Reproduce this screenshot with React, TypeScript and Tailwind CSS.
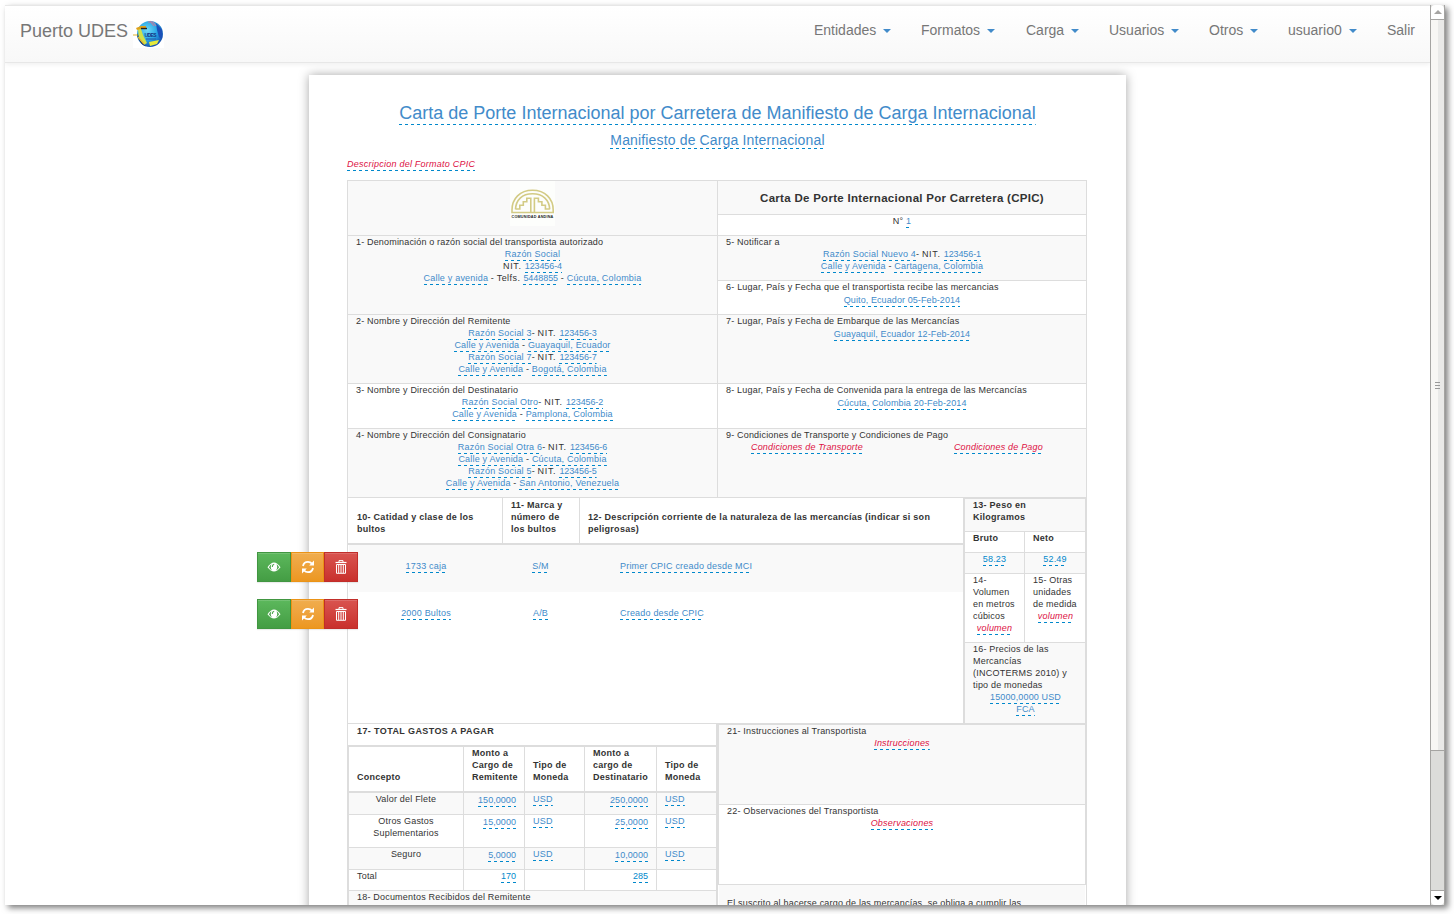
import React from "react";

type Kids = { children?: React.ReactNode; className?: string };

const dashed =
  "-mb-px inline-block whitespace-nowrap pb-px bg-[repeating-linear-gradient(to_right,#0088cc_0_3px,transparent_3px_6px)] bg-[length:100%_1px] bg-bottom bg-no-repeat ";

function L({ children, className = "" }: Kids) {
  return <a className={dashed + "text-[#428bca] " + className}>{children}</a>;
}

function Empty({ children }: Kids) {
  return <a className={dashed + "italic text-[#dd1144]"}>{children}</a>;
}

function Cell({ children, className = "" }: Kids) {
  return <div className={"border-l border-t border-[#ddd] px-2 " + className}>{children}</div>;
}

function Nit({ value }: { value: string }) {
  return (
    <>
      <span className="tracking-[0.650px]">NIT. </span>
      <L className="tracking-[-0.100px]">{value}</L>
    </>
  );
}

function Party({ name, nit, address, city }: { name: string; nit: string; address: string; city: string }) {
  return (
    <div className="text-center">
      <div>
        <L>{name}</L>- <Nit value={nit} />
      </div>
      <div>
        <L>{address}</L> - <L>{city}</L>
      </div>
    </div>
  );
}

function Globe() {
  return (
    <svg width="31" height="28" viewBox="0 0 31 28" className="block">
      <defs>
        <radialGradient id="globe" cx="40%" cy="35%" r="70%">
          <stop offset="0" stopColor="#6fd8f6" />
          <stop offset="0.55" stopColor="#25a4e4" />
          <stop offset="1" stopColor="#1546a8" />
        </radialGradient>
        <clipPath id="disc">
          <circle cx="17" cy="14" r="13" />
        </clipPath>
      </defs>
      <rect width="31" height="28" fill="#fff" />
      <circle cx="17" cy="14" r="13" fill="url(#globe)" />
      <g clipPath="url(#disc)">
        <path d="M5 9l3 0 2 6 4 8-3 2-5-6z" fill="#cfe04a" />
        <path d="M16 22l10-2-2 4-7 2z" fill="#e6ea3a" />
        <path d="M23 3l6 7 0 9-3-2-2-7z" fill="#1b50b8" />
        <path d="M4 14q3 9 9 13" fill="none" stroke="#14306f" strokeWidth="1.2" />
      </g>
      <path d="M3 8l5-2 5 0 0 2-5 1-4 1z" fill="#e0a21c" />
      <path d="M8 8.500h6" stroke="#222" strokeWidth="1.400" />
      <path d="M15 2l5 0 3 4M17 1l4 5" stroke="#b77fa5" strokeWidth="1.200" fill="none" />
      <path d="M0 15h5M5 17l6 7" stroke="#e0b52c" strokeWidth="1.200" />
      <text x="11.500" y="17" fontSize="5" fontWeight="700" fill="#16337f" textLength="12" fontFamily="Liberation Sans">UDES</text>
      <path d="M13 19h10" stroke="#2b62ad" strokeWidth="1.200" />
    </svg>
  );
}

function AndeanLogo() {
  return (
    <svg width="45" height="45" viewBox="0 0 45 45" className="block">
      <rect width="45" height="45" fill="#fdfefc" />
      <g fill="none" stroke="#d3cb85" strokeWidth="1.600">
        <path d="M2 31.500V29C2 17.500 10 9.300 22.500 9.300S43.200 17.500 43.200 29V31.500Z" />
        <path d="M5.500 28.300C5.800 19 12 12.800 22.500 12.800S39.400 19 39.700 28.300" />
        <path d="M20.800 31V17.300H16.800V20.700H13.300V24.200H9.800V28H5.500" />
        <path d="M24.400 31V17.300H28.400V20.700H31.900V24.200H35.400V28H39.700" />
      </g>
      <text x="1.500" y="36.800" fontSize="3.700" fontWeight="700" fill="#222" textLength="42" lengthAdjust="spacingAndGlyphs" fontFamily="Liberation Sans">COMUNIDAD ANDINA</text>
    </svg>
  );
}

function EyeIcon() {
  return (
    <svg width="14" height="14" viewBox="0 0 14 14" className="shrink-0">
      <path d="M0.500 7.300Q7-2.400 13.500 7.300Q7 15.800 0.500 7.300Z" fill="#fff" />
      <path d="M1.900 7.200Q3 5.200 4.400 4.300Q2.900 8.500 5.200 10.500Q3.200 9.500 1.900 7.200ZM12.100 7.200Q11 5.200 9.600 4.300Q11.100 8.500 8.800 10.500Q10.800 9.500 12.100 7.200Z" fill="#4da74d" />
      <path d="M7.200 4.300Q5.200 4.700 5.300 7" fill="none" stroke="#4da74d" strokeWidth="1.100" />
    </svg>
  );
}

function RefreshIcon() {
  return (
    <svg width="14" height="14" viewBox="0 0 14 14" fill="none" stroke="#fff" strokeWidth="1.800" className="shrink-0">
      <path d="M2 6C2.500 3.200 4.600 1.800 7 1.800C8.700 1.800 10 2.500 11 3.600" />
      <path d="M12 8C11.500 10.800 9.400 12.200 7 12.200C5.300 12.200 4 11.500 3 10.400" />
      <path d="M13 0.600V5.600H8.200Z" fill="#fff" stroke="none" />
      <path d="M1 13.400V8.400H5.800Z" fill="#fff" stroke="none" />
    </svg>
  );
}

function TrashIcon() {
  return (
    <svg width="12" height="14" viewBox="0 0 12 14" fill="none" stroke="#fff" className="-mt-px shrink-0">
      <path d="M4 2V0.600H8V2" />
      <path d="M0.500 2.500H11.500" strokeWidth="1.200" />
      <path d="M1.500 4.500H10.500V13.300H1.500Z" strokeWidth="1" />
      <path d="M3.700 4.500V13M6 4.500V13M8.300 4.500V13" strokeWidth="1" />
    </svg>
  );
}

function Actions() {
  const b = "flex h-[30px] items-center justify-center border bg-gradient-to-b shadow-[inset_0_1px_0_rgba(255,255,255,0.15),0_1px_1px_rgba(0,0,0,0.075)] ";
  return (
    <div className="absolute -left-[92px] top-[7px] flex">
      <button className={b + "w-[34px] border-[#419641] from-[#5cb85c] to-[#449d44]"}><EyeIcon /></button>
      <button className={b + "w-[33px] border-[#eb9316] from-[#f0ad4e] to-[#ec971f]"}><RefreshIcon /></button>
      <button className={b + "w-[34px] border-[#c12e2a] from-[#d9534f] to-[#c9302c]"}><TrashIcon /></button>
    </div>
  );
}

const nav: [string, string, boolean][] = [
  ["Entidades", "w-[107px]", true],
  ["Formatos", "w-[105px]", true],
  ["Carga", "w-[83px]", true],
  ["Usuarios", "w-[100px]", true],
  ["Otros", "w-[79px]", true],
  ["usuario0", "w-[99px]", true],
  ["Salir", "w-[43px]", false],
];

function NavBar() {
  return (
    <nav className="flex h-[58px] border-b border-t border-[#e7e7e7] bg-gradient-to-b from-white to-[#f8f8f8] text-[#777] shadow-[0_1px_5px_rgba(0,0,0,0.075)]">
      <div className="flex pl-[15px] pt-[14px]">
        <span className="text-[18px] leading-[22px]">Puerto UDES</span>
        <span className="ml-[5px]"><Globe /></span>
      </div>
      <ul className="ml-auto flex items-start pt-[14px] text-[14px] leading-5">
        {nav.map(([label, w, caret]) => (
          <li key={label} className={"flex items-center " + w}>
            {label}
            {caret && <i className="ml-[7px] mt-[2px] border-x-4 border-t-4 border-x-transparent border-t-[#428bca]" />}
          </li>
        ))}
      </ul>
    </nav>
  );
}

function Parties() {
  return (
    <section className="grid grid-cols-[370px_370px]">
      <div>
        <Cell className="flex h-[55px] justify-center bg-[#f9f9f9]"><AndeanLogo /></Cell>
        <Cell className="h-[79px] bg-[#f9f9f9]">
          <p className="tracking-[0.170px]">1- Denominación o razón social del transportista autorizado</p>
          <div className="text-center">
            <div><L>Razón Social</L></div>
            <div><Nit value="123456-4" /></div>
            <div><L>Calle y avenida</L> - <span className="tracking-[0.450px]">Telfs. </span><L className="tracking-[-0.050px]">5448855</L> - <L>Cúcuta, Colombia</L></div>
          </div>
        </Cell>
        <Cell className="h-[69px] bg-[#f9f9f9]">
          <p>2- Nombre y Dirección del Remitente</p>
          <Party name="Razón Social 3" nit="123456-3" address="Calle y Avenida" city="Guayaquil, Ecuador" />
          <Party name="Razón Social 7" nit="123456-7" address="Calle y Avenida" city="Bogotá, Colombia" />
        </Cell>
        <Cell className="h-[45px]">
          <p>3- Nombre y Dirección del Destinatario</p>
          <Party name="Razón Social Otro" nit="123456-2" address="Calle y Avenida" city="Pamplona, Colombia" />
        </Cell>
        <Cell className="h-[69px] bg-[#f9f9f9]">
          <p>4- Nombre y Dirección del Consignatario</p>
          <Party name="Razón Social Otra 6" nit="123456-6" address="Calle y Avenida" city="Cúcuta, Colombia" />
          <Party name="Razón Social 5" nit="123456-5" address="Calle y Avenida" city="San Antonio, Venezuela" />
        </Cell>
      </div>
      <div className="border-r border-[#ddd]">
        <Cell className="h-[34px] bg-[#f9f9f9] text-center text-[11.500px] font-bold leading-[34px] tracking-[0.290px]">
          Carta De Porte Internacional Por Carretera (CPIC)
        </Cell>
        <Cell className="h-[21px] text-center">N° <L>1</L></Cell>
        <Cell className="h-[45px] bg-[#f9f9f9]">
          <p>5- Notificar a</p>
          <Party name="Razón Social Nuevo 4" nit="123456-1" address="Calle y Avenida" city="Cartagena, Colombia" />
        </Cell>
        <Cell className="h-[34px]">
          <p className="tracking-[0.210px]">6- Lugar, País y Fecha que el transportista recibe las mercancias</p>
          <div className="mt-px text-center"><L className="tracking-[0.090px]">Quito, Ecuador 05-Feb-2014</L></div>
        </Cell>
        <Cell className="h-[69px] bg-[#f9f9f9]">
          <p className="tracking-[0.210px]">7- Lugar, País y Fecha de Embarque de las Mercancías</p>
          <div className="mt-px text-center"><L className="tracking-[0.110px]">Guayaquil, Ecuador 12-Feb-2014</L></div>
        </Cell>
        <Cell className="h-[45px]">
          <p>8- Lugar, País y Fecha de Convenida para la entrega de las Mercancías</p>
          <div className="mt-px text-center"><L className="tracking-[0.130px]">Cúcuta, Colombia 20-Feb-2014</L></div>
        </Cell>
        <Cell className="h-[69px] bg-[#f9f9f9]">
          <p className="tracking-[0.180px]">9- Condiciones de Transporte y Condiciones de Pago</p>
          <div className="flex gap-[91px] pl-[25px] tracking-[0.180px]">
            <Empty>Condiciones de Transporte</Empty>
            <Empty>Condiciones de Pago</Empty>
          </div>
        </Cell>
      </div>
    </section>
  );
}

const goods: [string, string, string, string][] = [
  ["1733 caja", "S/M", "Primer CPIC creado desde MCI", "bg-[#f9f9f9]"],
  ["2000 Bultos", "A/B", "Creado desde CPIC", "bg-white"],
];

function Goods() {
  return (
    <section className="flex h-[226px]">
      <div className="w-[616px] border-l border-t border-[#ddd]">
        <div className="grid h-[47px] grid-cols-[154px_77px_384px] border-b-2 border-[#ddd] font-bold tracking-[0.270px]">
          <div className="flex items-end pb-2 pl-[9px]"><p>10- Catidad y clase de los<br />bultos</p></div>
          <div className="flex items-end border-l border-[#ddd] pb-2 pl-2"><p>11- Marca y<br />número de<br />los bultos</p></div>
          <div className="flex items-end border-l border-[#ddd] pb-2 pl-2"><p className="whitespace-nowrap">12- Descripción corriente de la naturaleza de las mercancías (indicar si son<br />peligrosas)</p></div>
        </div>
        {goods.map(([qty, mark, text, bg]) => (
          <div key={qty} className={"relative ml-px grid h-[47px] grid-cols-[154px_75px_385px] pt-[15px] " + bg}>
            <div className="text-center"><L>{qty}</L></div>
            <div className="text-center"><L>{mark}</L></div>
            <div className="pl-[42px]"><L>{text}</L></div>
            <Actions />
          </div>
        ))}
      </div>
      <div className="w-[124px] border-x-2 border-t-2 border-[#ddd]">
        <div className="h-8 bg-[#f9f9f9] pl-2 font-bold tracking-[0.270px]">13- Peso en<br />Kilogramos</div>
        <div className="grid h-[21px] grid-cols-[59px_61px] border-t border-[#ddd] font-bold tracking-[0.270px]">
          <div className="pl-2">Bruto</div>
          <div className="border-l border-[#ddd] pl-2">Neto</div>
        </div>
        <div className="grid h-[21px] grid-cols-[59px_61px] border-t border-[#ddd] bg-[#f9f9f9] text-center">
          <div><L className="!text-[#0088cc]">58.23</L></div>
          <div className="border-l border-[#ddd]"><L className="!text-[#0088cc]">52.49</L></div>
        </div>
        <div className="grid h-[69px] grid-cols-[59px_61px] border-t border-[#ddd]">
          <div className="whitespace-nowrap pl-2">14-<br />Volumen<br />en metros<br />cúbicos<div className="pr-2 text-center"><Empty>volumen</Empty></div></div>
          <div className="whitespace-nowrap border-l border-[#ddd] pl-2">15- Otras<br />unidades<br />de medida<div className="pr-[7px] text-center"><Empty>volumen</Empty></div></div>
        </div>
        <div className="h-[81px] whitespace-nowrap border-t border-[#ddd] bg-[#f9f9f9] px-2">
          16- Precios de las<br />Mercancías<br /><span className="tracking-[0.250px]">(INCOTERMS 2010) y</span><br />tipo de monedas
          <div className="pl-px text-center"><L className="tracking-[0.130px]">15000,0000 USD</L></div>
          <div className="pl-px text-center"><L>FCA</L></div>
        </div>
      </div>
    </section>
  );
}

const costGrid = "grid grid-cols-[114px_61px_60px_72px_60px] ";
const costs: [string, string, string, string][] = [
  ["Valor del Flete", "150,0000", "250,0000", "h-[21px] bg-[#f9f9f9]"],
  ["Otros Gastos Suplementarios", "15,0000", "25,0000", "h-[33px] border-t"],
  ["Seguro", "5,0000", "10,0000", "h-[22px] border-t bg-[#f9f9f9]"],
];

function Costs() {
  return (
    <section className="flex">
      <div className="w-[369px]">
        <div className="h-[22px] border-l border-t border-[#ddd] pl-[9px] pt-px font-bold tracking-[0.400px]">17- TOTAL GASTOS A PAGAR</div>
        <div className="border-l-2 border-[#ddd]">
          <div className={costGrid + "h-12 border-y-2 border-[#ddd] font-bold tracking-[0.250px]"}>
            <div className="flex items-end pb-2 pl-2">Concepto</div>
            <div className="border-l border-[#ddd] pl-2">Monto a<br />Cargo de<br />Remitente</div>
            <div className="flex items-end border-l border-[#ddd] pb-2 pl-2"><p>Tipo de<br />Moneda</p></div>
            <div className="border-l border-[#ddd] pl-2">Monto a<br />cargo de<br />Destinatario</div>
            <div className="flex items-end border-l border-[#ddd] pb-2 pl-2"><p>Tipo de<br />Moneda</p></div>
          </div>
          {costs.map(([name, a, b, cls]) => (
            <div key={name} className={costGrid + "border-[#ddd] " + cls}>
              <div className="px-4 text-center">{name}</div>
              <div className="border-l border-[#ddd] pr-[8px] pt-px text-right tracking-[0.050px]"><L>{a}</L></div>
              <div className="border-l border-[#ddd] pl-2"><L>USD</L></div>
              <div className="border-l border-[#ddd] pr-[8px] pt-px text-right tracking-[0.050px]"><L>{b}</L></div>
              <div className="border-l border-[#ddd] pl-2"><L>USD</L></div>
            </div>
          ))}
          <div className={costGrid + "h-[21px] border-t border-[#ddd]"}>
            <div className="pl-2">Total</div>
            <div className="border-l border-[#ddd] pr-[8px] text-right tracking-normal"><L className="!text-[#0088cc]">170</L></div>
            <div className="border-l border-[#ddd]" />
            <div className="border-l border-[#ddd] pr-[8px] text-right tracking-normal"><L className="!text-[#0088cc]">285</L></div>
            <div className="border-l border-[#ddd]" />
          </div>
          <div className="h-20 border-t border-[#ddd] bg-[#f9f9f9] pl-2">18- Documentos Recibidos del Remitente</div>
        </div>
      </div>
      <div className="w-[371px]">
        <div className="border-l-3 border-r-2 border-t-2 border-[#ddd]">
          <div className="h-[79px] bg-[#f9f9f9] px-2">
            21- Instrucciones al Transportista
            <div className="text-center"><Empty>Instrucciones</Empty></div>
          </div>
          <div className="h-[81px] border-y border-[#ddd] px-2">
            22- Observaciones del Transportista
            <div className="text-center"><Empty>Observaciones</Empty></div>
          </div>
        </div>
        <div className="h-20 border-l-2 border-r border-[#ddd]">
          <div className="mx-px h-20 bg-[#f9f9f9] px-2 pt-3">El suscrito al hacerse cargo de las mercancías, se obliga a cumplir las</div>
        </div>
      </div>
    </section>
  );
}

function Sheet() {
  return (
    <main className="ml-[304px] mt-[12px] h-[900px] w-[817px] bg-white px-[38px] pt-[28px] text-[9px] leading-3 tracking-[0.200px] shadow-[0_0_10px_rgba(0,0,0,0.350)]">
      <h1 className="h-5 text-center text-[18px] leading-[21px] tracking-normal"><L>Carta de Porte Internacional por Carretera de Manifiesto de Carga Internacional</L></h1>
      <h2 className="mt-[9px] h-4 text-center text-[14px] leading-4 tracking-[0.150px]"><L>Manifiesto de Carga Internacional</L></h2>
      <p className="mb-[10px] mt-[10px] h-3 tracking-[0.240px]"><Empty>Descripcion del Formato CPIC</Empty></p>
      <Parties />
      <Goods />
      <Costs />
    </main>
  );
}

function ScrollBar() {
  return (
    <aside className="flex w-[15px] flex-col border-x border-[#a5a4a2] bg-[#dcdcda]">
      <div className="flex h-[15px] items-center justify-center rounded-t-sm border-b border-[#a5a4a2] bg-white">
        <i className="border-x-4 border-b-4 border-x-transparent border-b-[#a5a4a2]" />
      </div>
      <div className="flex h-[731px] flex-col items-center justify-center gap-[2px] border-b border-[#a5a4a2] bg-gradient-to-r from-[#f7f6f4] from-50% to-[#e9e9e8] to-50%">
        <i className="h-px w-[5px] bg-[#999]" />
        <i className="h-px w-[5px] bg-[#999]" />
        <i className="h-px w-[5px] bg-[#999]" />
      </div>
      <div className="mt-auto flex h-[15px] items-center justify-center rounded-b-sm border-t border-[#a5a4a2] bg-white">
        <i className="border-x-4 border-t-4 border-x-transparent border-t-black" />
      </div>
    </aside>
  );
}

export default function App() {
  return (
    <div className="h-[914px] w-[1454px] overflow-hidden bg-white pl-[5px] pt-[5px] font-['Liberation_Sans',Arial,sans-serif] text-[#333]">
      <div className="flex h-[900px] w-[1440px] bg-white shadow-[3px_3px_6px_rgba(0,0,0,0.500)]">
        <div className="w-[1425px] overflow-hidden">
          <NavBar />
          <Sheet />
        </div>
        <ScrollBar />
      </div>
    </div>
  );
}
